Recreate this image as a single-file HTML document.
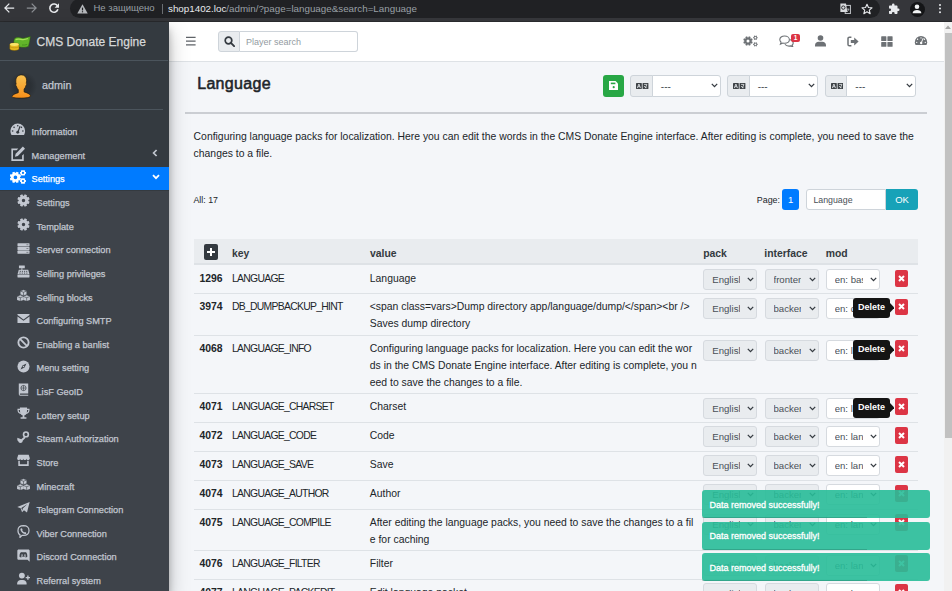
<!DOCTYPE html>
<html><head><meta charset="utf-8">
<style>
*{box-sizing:border-box;margin:0;padding:0}
html,body{width:952px;height:591px;overflow:hidden;background:#f4f6f9;font-family:"Liberation Sans",sans-serif;color:#212529}
.a{position:absolute}
#chrome{left:0;top:0;width:952px;height:22px;background:#35363a}
#pill{left:70px;top:-1px;width:810px;height:18.6px;background:#202124;border-radius:10px}
#sidebar{z-index:5;left:0;top:22px;width:168.5px;height:569px;background:#343a40;box-shadow:0 9px 19px rgba(0,0,0,.25),0 7px 7px rgba(0,0,0,.22)}
#navbar{left:168px;top:22px;width:776px;height:40px;background:#fff;border-bottom:1px solid #dee2e6}
#content{left:168px;top:62px;width:776px;height:529px;background:#f4f6f9}
#scroll{left:944px;top:22px;width:8px;height:569px;background:#f1f1f1}
.nav{position:absolute;left:0;width:168px;height:23.5px;color:#c2c7d0;font-size:9.7px;line-height:23.5px;white-space:nowrap}
.nav .t{position:absolute;left:31.5px;top:0}
.nav.sub .t{left:36.5px}
.nav svg{position:absolute}
.txt{white-space:nowrap;position:absolute}
.sb{-webkit-text-stroke:0.25px currentColor}
</style></head><body>
<!-- browser chrome -->
<div id="chrome" class="a"></div>
<div id="pill" class="a"></div>
<div class="a" style="left:0;top:21px;width:952px;height:1px;background:#292a2d"></div>
<svg class="a" style="left:3px;top:2.3px" width="12" height="12" viewBox="0 0 12 12"><path d="M11.2 6H2.2M6.3 1.6L1.9 6l4.4 4.4" fill="none" stroke="#e8eaed" stroke-width="1.25"/></svg>
<svg class="a" style="left:25.5px;top:2.3px" width="12" height="12" viewBox="0 0 12 12"><path d="M.8 6h9M5.7 1.6L10.1 6l-4.4 4.4" fill="none" stroke="#8b8e93" stroke-width="1.25"/></svg>
<svg class="a" style="left:48px;top:2px" width="12" height="12" viewBox="0 0 12 12"><path d="M9.6 4.2A4.1 4.1 0 1 0 9.9 7.3" fill="none" stroke="#e8eaed" stroke-width="1.6"/><path d="M11 1.3v4.4H6.6z" fill="#e8eaed"/></svg>
<svg class="a" style="left:76.5px;top:3.5px" width="11" height="10" viewBox="0 0 11 10"><path d="M5.5 0.3L10.7 9.4H0.3z" fill="#b5b8bc"/><rect x="4.9" y="3.6" width="1.2" height="2.8" fill="#202124"/><rect x="4.9" y="7.2" width="1.2" height="1.1" fill="#202124"/></svg>
<div class="txt" style="left:93.5px;top:1.2px;font-size:9.5px;line-height:13px;color:#9aa0a6">Не защищено</div>
<div class="a" style="left:161.5px;top:3.5px;width:1px;height:10px;background:#6b6e72"></div>
<div class="txt" style="left:168px;top:2px;font-size:9.8px;line-height:13px;color:#9aa0a6"><span style="color:#e8eaed">shop1402.loc</span>/admin/?page=language&amp;search=Language</div>
<svg class="a" style="left:839.5px;top:3px" width="11" height="11" viewBox="0 0 11 11"><rect x="5.2" y="2.4" width="5.2" height="8.2" fill="none" stroke="#c5c8cc" stroke-width="1"/><path d="M.4 .4h5.6l1.4 8.6H.4z" fill="#d8dadd"/><circle cx="3.3" cy="4.6" r="1.7" fill="none" stroke="#202124" stroke-width=".9"/><path d="M6.6 6.2h2.6M8 5.6v.6M6.8 9c1-.6 1.8-1.6 2-2.8" stroke="#c5c8cc" stroke-width=".7" fill="none"/></svg>
<svg class="a" style="left:861px;top:3px" width="12" height="12" viewBox="0 0 24 24"><path d="M12 2.5l2.9 6.6 7.1.6-5.4 4.7 1.7 7-6.3-3.8-6.3 3.8 1.7-7L2 9.7l7.1-.6z" fill="none" stroke="#e8eaed" stroke-width="2.2" stroke-linejoin="round"/></svg>
<svg class="a" style="left:888px;top:3px" width="12" height="12" viewBox="0 0 24 24"><path d="M20.5 11H19V7c0-1.1-.9-2-2-2h-4V3.5a2.5 2.5 0 0 0-5 0V5H4c-1.1 0-2 .9-2 2v3.8h1.5a2.7 2.7 0 0 1 0 5.4H2V20c0 1.1.9 2 2 2h3.8v-1.5a2.7 2.7 0 0 1 5.4 0V22H17c1.1 0 2-.9 2-2v-4h1.5a2.5 2.5 0 0 0 0-5z" fill="#e8eaed"/></svg>
<div class="a" style="left:909.5px;top:1.5px;width:15px;height:15px;border-radius:50%;background:#141517"></div>
<svg class="a" style="left:911px;top:3px" width="12" height="12" viewBox="0 0 12 12"><circle cx="6" cy="3.8" r="2.3" fill="#f1f3f4"/><path d="M1.6 10.2c0-2 2.2-3.2 4.4-3.2s4.4 1.2 4.4 3.2z" fill="#f1f3f4"/></svg>
<div class="a" style="left:939px;top:4px;width:2.4px;height:2.4px;border-radius:50%;background:#e8eaed;box-shadow:0 3.6px 0 #e8eaed,0 7.2px 0 #e8eaed"></div>

<!-- sidebar -->
<div id="sidebar" class="a"></div>
<div class="a" style="z-index:6;left:0;top:22px;width:168px;height:39px;border-bottom:1px solid #4b545c"></div>
<svg class="a" style="z-index:6;left:9px;top:35.5px" width="22" height="15" viewBox="0 0 22 15"><path d="M5.2 3.2C6.4 1.6 8.6 1 10.6 1.6c2.2.6 4.4.8 6.6 0 1.4-.5 2.8-1 4.2-1.2-.4 3.4-1 6.8-2 10-2.2.8-4.6 1.2-7 .8-2.4-.4-4.8-.2-7 .6C4.6 8.8 4.6 5.8 5.2 3.2z" fill="#62b42a" stroke="#2d5a12" stroke-width=".5"/><path d="M6.6 3.8c1.8-1.2 3.6-.8 5.4-.4 2.4.5 4.6.2 7-.8" fill="none" stroke="#a6e05a" stroke-width="1.1"/><path d="M13 9c1.8.3 3.6 0 5.2-.6" fill="none" stroke="#3f8a1c" stroke-width=".8"/><path d="M.8 8.6c0-.9 2.1-1.6 4.6-1.6S10 7.7 10 8.6v4.2c0 .9-2.1 1.7-4.6 1.7S.8 13.7.8 12.8z" fill="#e6b81e" stroke="#7a5a08" stroke-width=".5"/><ellipse cx="5.4" cy="8.5" rx="4.4" ry="1.4" fill="#f8e46a"/><path d="M1.2 10.8c1 .8 2.6 1 4.2 1s3.2-.2 4.2-1" stroke="#b48a10" stroke-width=".6" fill="none"/></svg>
<div class="txt sb" style="z-index:6;left:36.5px;top:34.3px;font-size:12px;line-height:16px;color:#d6d8d9">CMS Donate Engine</div>
<div class="a" style="z-index:6;left:0;top:61px;width:163px;height:49px;border-bottom:1px solid #4b545c"></div>
<div class="a" style="z-index:6;left:8.5px;top:72px;width:28px;height:28px;border-radius:50%;background:radial-gradient(circle,#2b3035 40%,#343a40 72%)"></div>
<svg class="a" style="z-index:6;left:12px;top:73.5px" width="19" height="27" viewBox="0 0 19 27"><defs><linearGradient id="og" x1="0" y1="0" x2="0" y2="1"><stop offset="0" stop-color="#f8c150"/><stop offset="1" stop-color="#f78f1a"/></linearGradient></defs><path d="M9.4 .9c3.1 0 5.2 2 5.2 5.4 0 1.2-.1 2.2-.4 3 .6.3.5 1.5-.2 2.1-.4 1.6-1 2.8-1.9 3.6v2.9c2.8.8 5.4 1.8 6.2 3.4.5 1.2-.3 2.8-8.9 2.8S-.4 23.3.1 22.1c.8-1.6 3.4-2.6 6.2-3.4v-2.9c-.9-.8-1.5-2-1.9-3.6-.7-.6-.8-1.8-.2-2.1-.3-.8-.4-1.8-.4-3C3.8 2.9 6.2.9 9.4.9z" fill="url(#og)" stroke="#221a10" stroke-width=".7"/></svg>
<div class="txt sb" style="z-index:6;left:42px;top:78.4px;font-size:10.8px;line-height:14px;color:#c2c7d0">admin</div>
<div class="a" style="z-index:6;left:0;top:190.5px;width:168.5px;height:401px;background:#3e434a"></div>
<div class="a" style="z-index:6;left:0;top:167.2px;width:168.5px;height:23.3px;background:#007bff"></div>
<svg class="a" style="z-index:7;left:151.5px;top:173.7px" width="8" height="6" viewBox="0 0 8 6"><path d="M1 1.2l3 3 3-3" fill="none" stroke="#fff" stroke-width="1.8"/></svg>
<svg class="a" style="z-index:7;left:152px;top:148.5px" width="6" height="8" viewBox="0 0 6 8"><path d="M4.6 1L1.6 4l3 3" fill="none" stroke="#c2c7d0" stroke-width="1.7"/></svg>
<svg class="a ic" style="z-index:7;left:10px;top:122.15px" width="15.5" height="15.5" viewBox="0 0 16 16"><path d="M8 1.6A7.6 7.6 0 0 0 .4 9.2c0 1.5.4 2.9 1.1 4.1h13c.7-1.2 1.1-2.6 1.1-4.1A7.6 7.6 0 0 0 8 1.6z" fill="#c2c7d0"/><g fill="#343a40"><circle cx="8" cy="3.9" r=".85"/><circle cx="4.2" cy="5.5" r=".85"/><circle cx="2.7" cy="9.3" r=".85"/><circle cx="13.3" cy="9.3" r=".85"/><circle cx="11.8" cy="5.5" r=".85"/><circle cx="8" cy="10.6" r="1.5"/></g><path d="M10.4 4.4L8.2 10.4" stroke="#343a40" stroke-width="1.2"/></svg>
<svg class="a ic" style="z-index:7;left:10px;top:145.77px" width="15.5" height="15.5" viewBox="0 0 16 16"><path d="M1.4 2.6h7.2l-1.7 1.7H3.1v9.4h9.4V9.9l1.7-1.7v7.2H1.4z" fill="#c2c7d0"/><path d="M13.3.6l2.2 2.2-7.4 7.4-3 .8.8-3z" fill="#c2c7d0"/></svg>
<svg class="a ic" style="z-index:7;left:10px;top:169.39px" width="15.5" height="15.5" viewBox="0 0 16 16"><path fill-rule="evenodd" d="M10.28 9.01L11.48 9.78L10.59 11.93L9.20 11.62L8.62 12.20L8.93 13.59L6.78 14.48L6.01 13.28L5.19 13.28L4.42 14.48L2.27 13.59L2.58 12.20L2.00 11.62L0.61 11.93L-0.28 9.78L0.92 9.01L0.92 8.19L-0.28 7.42L0.61 5.27L2.00 5.58L2.58 5.00L2.27 3.61L4.42 2.72L5.19 3.92L6.01 3.92L6.78 2.72L8.93 3.61L8.62 5.00L9.20 5.58L10.59 5.27L11.48 7.42L10.28 8.19ZM7.50 8.60A1.9 1.9 0 1 0 3.70 8.60A1.9 1.9 0 1 0 7.50 8.60Z" fill="#fff"/><path fill-rule="evenodd" d="M15.71 3.04L16.50 3.20L16.50 4.80L15.71 4.96L15.38 5.52L15.64 6.29L14.26 7.08L13.73 6.48L13.07 6.48L12.54 7.08L11.16 6.29L11.42 5.52L11.09 4.96L10.30 4.80L10.30 3.20L11.09 3.04L11.42 2.48L11.16 1.71L12.54 0.92L13.07 1.52L13.73 1.52L14.26 0.92L15.64 1.71L15.38 2.48ZM14.50 4.00A1.1 1.1 0 1 0 12.30 4.00A1.1 1.1 0 1 0 14.50 4.00Z" fill="#fff"/><path fill-rule="evenodd" d="M15.71 11.44L16.50 11.60L16.50 13.20L15.71 13.36L15.38 13.92L15.64 14.69L14.26 15.48L13.73 14.88L13.07 14.88L12.54 15.48L11.16 14.69L11.42 13.92L11.09 13.36L10.30 13.20L10.30 11.60L11.09 11.44L11.42 10.88L11.16 10.11L12.54 9.32L13.07 9.92L13.73 9.92L14.26 9.32L15.64 10.11L15.38 10.88ZM14.50 12.40A1.1 1.1 0 1 0 12.30 12.40A1.1 1.1 0 1 0 14.50 12.40Z" fill="#fff"/></svg>
<svg class="a ic" style="z-index:7;left:17px;top:194.26px" width="13" height="13" viewBox="0 0 16 16"><path fill-rule="evenodd" d="M13.98 8.53L15.55 9.51L14.41 12.27L12.60 11.85L11.85 12.60L12.27 14.41L9.51 15.55L8.53 13.98L7.47 13.98L6.49 15.55L3.73 14.41L4.15 12.60L3.40 11.85L1.59 12.27L0.45 9.51L2.02 8.53L2.02 7.47L0.45 6.49L1.59 3.73L3.40 4.15L4.15 3.40L3.73 1.59L6.49 0.45L7.47 2.02L8.53 2.02L9.51 0.45L12.27 1.59L11.85 3.40L12.60 4.15L14.41 3.73L15.55 6.49L13.98 7.47ZM10.10 8.00A2.1 2.1 0 1 0 5.90 8.00A2.1 2.1 0 1 0 10.10 8.00Z" fill="#c2c7d0"/></svg>
<svg class="a ic" style="z-index:7;left:17px;top:217.88px" width="13" height="13" viewBox="0 0 16 16"><path fill-rule="evenodd" d="M13.98 8.53L15.55 9.51L14.41 12.27L12.60 11.85L11.85 12.60L12.27 14.41L9.51 15.55L8.53 13.98L7.47 13.98L6.49 15.55L3.73 14.41L4.15 12.60L3.40 11.85L1.59 12.27L0.45 9.51L2.02 8.53L2.02 7.47L0.45 6.49L1.59 3.73L3.40 4.15L4.15 3.40L3.73 1.59L6.49 0.45L7.47 2.02L8.53 2.02L9.51 0.45L12.27 1.59L11.85 3.40L12.60 4.15L14.41 3.73L15.55 6.49L13.98 7.47ZM10.10 8.00A2.1 2.1 0 1 0 5.90 8.00A2.1 2.1 0 1 0 10.10 8.00Z" fill="#c2c7d0"/></svg>
<svg class="a ic" style="z-index:7;left:17px;top:241.50px" width="13" height="13" viewBox="0 0 16 16"><g fill="#c2c7d0"><rect x=".6" y="1.4" width="14.8" height="4" rx=".8"/><rect x=".6" y="6" width="14.8" height="4" rx=".8"/><rect x=".6" y="10.6" width="14.8" height="4" rx=".8"/></g><g fill="#3e434a" opacity=".7"><rect x="11.6" y="3" width="2.4" height=".9"/><rect x="11.6" y="7.6" width="2.4" height=".9"/><rect x="11.6" y="12.2" width="2.4" height=".9"/></g></svg>
<svg class="a ic" style="z-index:7;left:17px;top:265.12px" width="13" height="13" viewBox="0 0 16 16"><g fill="#c2c7d0"><rect x="2.4" y=".6" width="7.2" height="3.4" rx=".4"/><rect x="5.3" y="4" width="1.4" height="2"/><path d="M2.2 5.8h11.6l1.6 6H.6z"/><rect x=".6" y="12.4" width="14.8" height="3" rx=".5"/></g><g fill="#3e434a"><rect x="3.4" y="7.2" width="1.4" height="1.1"/><rect x="6" y="7.2" width="1.4" height="1.1"/><rect x="8.6" y="7.2" width="1.4" height="1.1"/><rect x="11.2" y="7.2" width="1.4" height="1.1"/><rect x="3" y="9.4" width="1.4" height="1.1"/><rect x="5.8" y="9.4" width="1.4" height="1.1"/><rect x="8.6" y="9.4" width="1.4" height="1.1"/><rect x="11.4" y="9.4" width="1.4" height="1.1"/></g></svg>
<svg class="a ic" style="z-index:7;left:17px;top:288.74px" width="13" height="13" viewBox="0 0 16 16"><path d="M8 1.00L12.0 2.50V6.70L8 8.20L4.0 6.70V2.50Z" fill="#c2c7d0"/><path d="M4.1 7.70L8.1 9.20V13.40L4.1 14.90L0.09999999999999964 13.40V9.20Z" fill="#c2c7d0"/><path d="M11.9 7.70L15.9 9.20V13.40L11.9 14.90L7.9 13.40V9.20Z" fill="#c2c7d0"/><path d="M4.0 2.50L8 4.00L12.0 2.50M8 4.00V8.20M0.09999999999999964 9.20L4.1 10.70L8.1 9.20M4.1 10.70V14.90M7.9 9.20L11.9 10.70L15.9 9.20M11.9 10.70V14.90" stroke="#3e434a" stroke-width=".75" fill="none"/><path d="M8 1.00L12.0 2.50V6.70L8 8.20L4.0 6.70V2.50Z" stroke="#3e434a" stroke-width=".5" fill="none"/></svg>
<svg class="a ic" style="z-index:7;left:17px;top:312.36px" width="13" height="13" viewBox="0 0 16 16"><path d="M.6 2.6h14.8v1.2L8 9.2.6 3.8z" fill="#c2c7d0"/><path d="M.6 5.6L8 10.9l7.4-5.3v7.8H.6z" fill="#c2c7d0"/></svg>
<svg class="a ic" style="z-index:7;left:17px;top:335.98px" width="13" height="13" viewBox="0 0 16 16"><circle cx="8" cy="8" r="6.3" fill="none" stroke="#c2c7d0" stroke-width="2.3"/><path d="M3.6 3.6l8.8 8.8" stroke="#c2c7d0" stroke-width="2.3"/></svg>
<svg class="a ic" style="z-index:7;left:17px;top:359.60px" width="13" height="13" viewBox="0 0 16 16"><circle cx="8" cy="8" r="7.4" fill="#c2c7d0"/><path d="M11.6 4.4L9.3 9.3 4.4 11.6l2.3-4.9z" fill="#3e434a"/><circle cx="8" cy="8" r="1" fill="#c2c7d0"/></svg>
<svg class="a ic" style="z-index:7;left:17px;top:383.22px" width="13" height="13" viewBox="0 0 16 16"><path d="M2.2.6h11.6v12.2H4a1 1 0 0 0 0 1.8h9.8v1H3.8a1.7 1.7 0 0 1-1.6-1.7z" fill="#c2c7d0"/><circle cx="8" cy="6.2" r="3.2" fill="none" stroke="#3e434a" stroke-width=".9"/><path d="M4.8 6.2h6.4M8 3v6.4" stroke="#3e434a" stroke-width=".8"/></svg>
<svg class="a ic" style="z-index:7;left:17px;top:406.84px" width="13" height="13" viewBox="0 0 16 16"><path d="M3.6.6h8.8v1.4h3v1.7c0 2.6-1.7 4.5-4 4.8-.6.9-1.4 1.6-2.3 1.8v2.3h2.5v1.8H4.4v-1.8h2.5v-2.3c-.9-.2-1.7-.9-2.3-1.8C2.3 8.2.6 6.3.6 3.7V2h3z" fill="#c2c7d0"/><path d="M2.1 3.6c0 1.5.8 2.8 2 3.3-.3-.9-.5-2-.5-3.3zM13.9 3.6c0 1.5-.8 2.8-2 3.3.3-.9.5-2 .5-3.3z" fill="#3e434a"/></svg>
<svg class="a ic" style="z-index:7;left:17px;top:430.46px" width="13" height="13" viewBox="0 0 16 16"><circle cx="11" cy="5.4" r="3.9" fill="#c2c7d0"/><circle cx="11" cy="5.4" r="1.9" fill="#3e434a"/><path d="M.4 9.4l4.8 2.1 4-3.4 1.4 1.4-3.6 3.6c0 1.7-1.3 2.8-2.8 2.8-1.3 0-2.3-.9-2.6-2.1L.4 12.6z" fill="#c2c7d0"/></svg>
<svg class="a ic" style="z-index:7;left:17px;top:454.08px" width="13" height="13" viewBox="0 0 16 16"><path d="M1.6.9h12.8l1.4 4.4c0 1.3-1 2.2-2.1 2.2s-2-.9-2-2c0 1.1-.9 2-2 2s-1.9-.9-1.9-2c0 1.1-.9 2-1.9 2s-2-.9-2-2c0 1.1-.9 2-2 2S.2 6.6.2 5.3z" fill="#c2c7d0"/><path d="M1.6 8.3h1.9v4.2h9v-4.2h1.9v6.6H1.6z" fill="#c2c7d0"/></svg>
<svg class="a ic" style="z-index:7;left:17px;top:477.70px" width="13" height="13" viewBox="0 0 16 16"><path d="M8 1.00L12.0 2.50V6.70L8 8.20L4.0 6.70V2.50Z" fill="#c2c7d0"/><path d="M4.1 7.70L8.1 9.20V13.40L4.1 14.90L0.09999999999999964 13.40V9.20Z" fill="#c2c7d0"/><path d="M11.9 7.70L15.9 9.20V13.40L11.9 14.90L7.9 13.40V9.20Z" fill="#c2c7d0"/><path d="M4.0 2.50L8 4.00L12.0 2.50M8 4.00V8.20M0.09999999999999964 9.20L4.1 10.70L8.1 9.20M4.1 10.70V14.90M7.9 9.20L11.9 10.70L15.9 9.20M11.9 10.70V14.90" stroke="#3e434a" stroke-width=".75" fill="none"/><path d="M8 1.00L12.0 2.50V6.70L8 8.20L4.0 6.70V2.50Z" stroke="#3e434a" stroke-width=".5" fill="none"/></svg>
<svg class="a ic" style="z-index:7;left:17px;top:501.32px" width="13" height="13" viewBox="0 0 16 16"><path d="M15.6 1.2L.3 7.3l4.2 1.5 1.7 5 2.4-2.5 3.7 2.8zM5.3 8.7l7.6-5-5.8 5.6-.5 2.5z" fill="#c2c7d0"/></svg>
<svg class="a ic" style="z-index:7;left:17px;top:524.94px" width="13" height="13" viewBox="0 0 16 16"><path d="M8 .8C3.8.8 1.2 2.5 1.2 6.9c0 2.7.8 4.5 2.5 5.3v3.1l2.5-2.6c.6.1 1.1.1 1.8.1 4.2 0 6.8-1.7 6.8-5.9S12.2.8 8 .8z" fill="none" stroke="#c2c7d0" stroke-width="1.5"/><path d="M5.4 4c.5-.2 1 .4 1.3 1.1.3.6 0 1-.3 1.3.5 1.3 1.4 2.1 2.7 2.7.3-.3.7-.6 1.3-.3.6.3 1.3.8 1.1 1.3-.3.9-1.1 1.2-1.8 1-2.7-.7-4.8-2.8-5.5-5.3-.2-.8.2-1.4 1.2-1.8z" fill="#c2c7d0"/></svg>
<svg class="a ic" style="z-index:7;left:17px;top:548.56px" width="13" height="13" viewBox="0 0 16 16"><path d="M2 .6h12c.9 0 1.6.7 1.6 1.6v13.4L13 13.2H2c-.9 0-1.6-.7-1.6-1.6V2.2C.4 1.3 1.1.6 2 .6z" fill="#c2c7d0"/><path d="M4.2 4.6c1-.8 2-1 2.4-.8l.2.4c.8-.1 1.6-.1 2.4 0l.2-.4c.4-.2 1.4 0 2.4.8.8 1.6 1 3.2.9 4.9-.7.5-1.4.8-2 1l-.5-.8c.4-.1.7-.3 1-.5-.2-.1-.3-.2-.4-.2-1.9.8-3.9.8-5.8 0l-.4.2c.3.2.6.4 1 .5l-.5.8c-.6-.2-1.3-.5-2-1-.1-1.7.1-3.3.9-4.9z" fill="#3e434a"/><ellipse cx="6.2" cy="7.6" rx=".9" ry="1" fill="#c2c7d0"/><ellipse cx="9.8" cy="7.6" rx=".9" ry="1" fill="#c2c7d0"/></svg>
<svg class="a ic" style="z-index:7;left:17px;top:572.18px" width="13" height="13" viewBox="0 0 16 16"><circle cx="6" cy="4.4" r="3.6" fill="#c2c7d0"/><path d="M.2 15.4v-1.2c0-2.6 2-4.4 4.4-4.4h2.8c2.4 0 4.4 1.8 4.4 4.4v1.2z" fill="#c2c7d0"/><path d="M13.4 4.2v5.4M10.7 6.9h5.4" stroke="#c2c7d0" stroke-width="1.7"/></svg>
<div class="txt sb" style="z-index:7;left:31.5px;top:125.20px;font-size:9.2px;line-height:14px;color:#c2c7d0">Information</div>
<div class="txt sb" style="z-index:7;left:31.5px;top:148.82px;font-size:9.2px;line-height:14px;color:#c2c7d0">Management</div>
<div class="txt sb" style="z-index:7;left:31.5px;top:172.44px;font-size:9.2px;line-height:14px;color:#fff">Settings</div>
<div class="txt sb" style="z-index:7;left:36.5px;top:196.06px;font-size:9.2px;line-height:14px;color:#c2c7d0">Settings</div>
<div class="txt sb" style="z-index:7;left:36.5px;top:219.68px;font-size:9.2px;line-height:14px;color:#c2c7d0">Template</div>
<div class="txt sb" style="z-index:7;left:36.5px;top:243.30px;font-size:9.2px;line-height:14px;color:#c2c7d0">Server connection</div>
<div class="txt sb" style="z-index:7;left:36.5px;top:266.92px;font-size:9.2px;line-height:14px;color:#c2c7d0">Selling privileges</div>
<div class="txt sb" style="z-index:7;left:36.5px;top:290.54px;font-size:9.2px;line-height:14px;color:#c2c7d0">Selling blocks</div>
<div class="txt sb" style="z-index:7;left:36.5px;top:314.16px;font-size:9.2px;line-height:14px;color:#c2c7d0">Configuring SMTP</div>
<div class="txt sb" style="z-index:7;left:36.5px;top:337.78px;font-size:9.2px;line-height:14px;color:#c2c7d0">Enabling a banlist</div>
<div class="txt sb" style="z-index:7;left:36.5px;top:361.40px;font-size:9.2px;line-height:14px;color:#c2c7d0">Menu setting</div>
<div class="txt sb" style="z-index:7;left:36.5px;top:385.02px;font-size:9.2px;line-height:14px;color:#c2c7d0">LisF GeoID</div>
<div class="txt sb" style="z-index:7;left:36.5px;top:408.64px;font-size:9.2px;line-height:14px;color:#c2c7d0">Lottery setup</div>
<div class="txt sb" style="z-index:7;left:36.5px;top:432.26px;font-size:9.2px;line-height:14px;color:#c2c7d0">Steam Authorization</div>
<div class="txt sb" style="z-index:7;left:36.5px;top:455.88px;font-size:9.2px;line-height:14px;color:#c2c7d0">Store</div>
<div class="txt sb" style="z-index:7;left:36.5px;top:479.50px;font-size:9.2px;line-height:14px;color:#c2c7d0">Minecraft</div>
<div class="txt sb" style="z-index:7;left:36.5px;top:503.12px;font-size:9.2px;line-height:14px;color:#c2c7d0">Telegram Connection</div>
<div class="txt sb" style="z-index:7;left:36.5px;top:526.74px;font-size:9.2px;line-height:14px;color:#c2c7d0">Viber Connection</div>
<div class="txt sb" style="z-index:7;left:36.5px;top:550.36px;font-size:9.2px;line-height:14px;color:#c2c7d0">Discord Connection</div>
<div class="txt sb" style="z-index:7;left:36.5px;top:573.98px;font-size:9.2px;line-height:14px;color:#c2c7d0">Referral system</div>

<!-- navbar -->
<div id="navbar" class="a"></div>
<svg class="a" style="left:185.5px;top:36px" width="10" height="10" viewBox="0 0 10 10"><path d="M0 1.4h9.6M0 5.2h9.6M0 8.9h9.6" stroke="#5f6368" stroke-width="1.3"/></svg>
<div class="a" style="left:218px;top:31.2px;width:22px;height:21px;background:#e9ecef;border:1px solid #ced4da;border-radius:3px 0 0 3px"></div>
<svg class="a" style="left:223.5px;top:36px" width="11" height="11" viewBox="0 0 11 11"><circle cx="4.5" cy="4.5" r="3.3" fill="none" stroke="#343a40" stroke-width="1.7"/><path d="M6.9 6.9l3.2 3.2" stroke="#343a40" stroke-width="1.9" stroke-linecap="round"/></svg>
<div class="a" style="left:240px;top:31.2px;width:118px;height:21px;background:#fff;border:1px solid #ced4da;border-left:none;border-radius:0 3px 3px 0"></div>
<div class="txt" style="left:246px;top:35.5px;font-size:9px;line-height:13px;color:#939ba2">Player search</div>
<svg class="a" style="left:742px;top:34px" width="17" height="14" viewBox="0 0 17 14"><path fill-rule="evenodd" d="M9.59 7.31L10.71 7.93L10.00 9.65L8.77 9.30L8.32 9.75L8.67 10.99L6.96 11.70L6.33 10.59L5.69 10.59L5.07 11.71L3.35 11.00L3.70 9.77L3.25 9.32L2.01 9.67L1.30 7.96L2.41 7.33L2.41 6.69L1.29 6.07L2.00 4.35L3.23 4.70L3.68 4.25L3.33 3.01L5.04 2.30L5.67 3.41L6.31 3.41L6.93 2.29L8.65 3.00L8.30 4.23L8.75 4.68L9.99 4.33L10.70 6.04L9.59 6.67ZM7.50 7.00A1.5 1.5 0 1 0 4.50 7.00A1.5 1.5 0 1 0 7.50 7.00Z" fill="#6d7175"/><path fill-rule="evenodd" d="M14.97 3.05L15.63 3.13L15.63 4.27L14.97 4.35L14.75 4.73L15.01 5.34L14.02 5.92L13.62 5.39L13.18 5.39L12.78 5.92L11.79 5.34L12.05 4.73L11.83 4.35L11.17 4.27L11.17 3.13L11.83 3.05L12.05 2.67L11.79 2.06L12.78 1.48L13.18 2.01L13.62 2.01L14.02 1.48L15.01 2.06L14.75 2.67ZM14.30 3.70A0.9 0.9 0 1 0 12.50 3.70A0.9 0.9 0 1 0 14.30 3.70Z" fill="#6d7175"/><path fill-rule="evenodd" d="M14.97 9.75L15.63 9.83L15.63 10.97L14.97 11.05L14.75 11.43L15.01 12.04L14.02 12.62L13.62 12.09L13.18 12.09L12.78 12.62L11.79 12.04L12.05 11.43L11.83 11.05L11.17 10.97L11.17 9.83L11.83 9.75L12.05 9.37L11.79 8.76L12.78 8.18L13.18 8.71L13.62 8.71L14.02 8.18L15.01 8.76L14.75 9.37ZM14.30 10.40A0.9 0.9 0 1 0 12.50 10.40A0.9 0.9 0 1 0 14.30 10.40Z" fill="#6d7175"/></svg>
<svg class="a" style="left:778.5px;top:35px" width="15" height="12" viewBox="0 0 15 12"><path d="M5.6 1C2.8 1 .8 2.6.8 4.6c0 1 .5 1.9 1.3 2.5L1.4 9.2 3.8 8c.6.2 1.2.3 1.8.3 2.8 0 4.8-1.6 4.8-3.6S8.4 1 5.6 1z" fill="none" stroke="#6d7175" stroke-width="1.1"/><path d="M11.3 4.6c1.7.5 2.9 1.8 2.9 3.3 0 .9-.4 1.7-1.1 2.3l.7 1.6-2.2-.9c-.5.1-1 .2-1.6.2-1.8 0-3.3-.8-4.1-1.9" fill="none" stroke="#6d7175" stroke-width="1.1"/></svg>
<div class="a" style="left:791px;top:33.5px;width:9px;height:8.5px;background:#dc3545;border-radius:2px"></div>
<div class="txt" style="left:791px;top:33.2px;width:9px;text-align:center;font-size:6.5px;line-height:9px;font-weight:700;color:#fff">1</div>
<svg class="a" style="left:814.5px;top:35px" width="11" height="12" viewBox="0 0 11 12"><circle cx="5.5" cy="3" r="2.8" fill="#6d7175"/><path d="M0 11.6V10.4C0 8.2 1.6 6.8 3.6 6.8h3.8c2 0 3.6 1.4 3.6 3.6v1.2z" fill="#6d7175"/></svg>
<svg class="a" style="left:846.5px;top:35.5px" width="12" height="11" viewBox="0 0 12 11"><path d="M4.4 1.2H2.4C1.6 1.2 1 1.8 1 2.6v5.8c0 .8.6 1.4 1.4 1.4h2" fill="none" stroke="#6d7175" stroke-width="1.5"/><path d="M7.2 1.4l4.4 4.1-4.4 4.1V7.1H3.8V3.9h3.4z" fill="#6d7175"/></svg>
<svg class="a" style="left:880.5px;top:35.5px" width="12" height="11" viewBox="0 0 12 11"><g fill="#6d7175"><rect x=".2" y=".2" width="5.2" height="4.9" rx=".6"/><rect x="6.4" y=".2" width="5.2" height="4.9" rx=".6"/><rect x=".2" y="5.9" width="5.2" height="4.9" rx=".6"/><rect x="6.4" y="5.9" width="5.2" height="4.9" rx=".6"/></g></svg>
<svg class="a" style="left:913.5px;top:35px" width="14" height="12" viewBox="0 0 16 14"><path d="M8 1.2A7.2 7.2 0 0 0 .8 8.4c0 1.3.3 2.4.9 3.4h12.6c.6-1 .9-2.1.9-3.4A7.2 7.2 0 0 0 8 1.2z" fill="#6d7175"/><circle cx="8" cy="3.4" r=".8" fill="#fff"/><circle cx="4" cy="5" r=".8" fill="#fff"/><circle cx="3" cy="8.6" r=".8" fill="#fff"/><circle cx="13" cy="8.6" r=".8" fill="#fff"/><circle cx="12" cy="5" r=".8" fill="#fff"/><path d="M10.6 3.6L8.6 8.6" stroke="#fff" stroke-width="1.1"/><circle cx="8.2" cy="9.4" r="1.4" fill="#fff"/></svg>

<!-- content -->
<div id="content" class="a"></div>
<div class="txt" style="left:197.2px;top:73.8px;font-size:16px;line-height:20px;font-weight:400;letter-spacing:0.32px;-webkit-text-stroke:.55px #212529;color:#212529">Language</div>
<div class="a" style="left:602.8px;top:74.8px;width:21.6px;height:21.8px;background:#28a745;border-radius:3px"></div>
<svg class="a" style="left:608.8px;top:80.6px" width="9.4" height="9.6" viewBox="0 0 9.4 9.6"><path d="M0 0h6.6l2.8 2.8v6.8H0z" fill="#fff"/><rect x="1.8" y="1.6" width="4.6" height="1.6" fill="#28a745"/><circle cx="4.7" cy="6.2" r="1.1" fill="#28a745"/></svg>
<div class="a" style="left:630.3px;top:75px;width:22.5px;height:21.5px;background:#e9ecef;border:1px solid #ced4da;border-radius:3px 0 0 3px"></div>
<svg class="a" style="left:636.0999999999999px;top:82.8px" width="12.5" height="6" viewBox="0 0 12.5 6"><rect x="0" y="0" width="5.8" height="6" rx=".6" fill="#3d4246"/><rect x="6.6" y="0" width="5.8" height="6" rx=".6" fill="#3d4246"/><path d="M1.3 5.1L2.9 1l1.6 4.1M1.9 3.7h2" stroke="#e9ecef" stroke-width=".8" fill="none"/><path d="M8.1 1.4h2.8l-1.6 3.8M8 3.2c.8.8 1.8 1.4 2.6 1.6" stroke="#e9ecef" stroke-width=".8" fill="none"/></svg>
<div class="a" style="left:651.8px;top:75px;width:69.5px;height:21.5px;background:#fff;border:1px solid #ced4da;border-radius:0 3px 3px 0"></div>
<div class="txt" style="left:660.8px;top:79.5px;font-size:10px;line-height:13px;color:#495057">---</div>
<svg class="a" style="left:711.3px;top:83px" width="7" height="5" viewBox="0 0 7 5"><path d="M.8 .9l2.7 2.7L6.2 .9" fill="none" stroke="#343a40" stroke-width="1.3"/></svg>
<div class="a" style="left:727.2px;top:75px;width:22.5px;height:21.5px;background:#e9ecef;border:1px solid #ced4da;border-radius:3px 0 0 3px"></div>
<svg class="a" style="left:733.0px;top:82.8px" width="12.5" height="6" viewBox="0 0 12.5 6"><rect x="0" y="0" width="5.8" height="6" rx=".6" fill="#3d4246"/><rect x="6.6" y="0" width="5.8" height="6" rx=".6" fill="#3d4246"/><path d="M1.3 5.1L2.9 1l1.6 4.1M1.9 3.7h2" stroke="#e9ecef" stroke-width=".8" fill="none"/><path d="M8.1 1.4h2.8l-1.6 3.8M8 3.2c.8.8 1.8 1.4 2.6 1.6" stroke="#e9ecef" stroke-width=".8" fill="none"/></svg>
<div class="a" style="left:748.7px;top:75px;width:69.5px;height:21.5px;background:#fff;border:1px solid #ced4da;border-radius:0 3px 3px 0"></div>
<div class="txt" style="left:757.7px;top:79.5px;font-size:10px;line-height:13px;color:#495057">---</div>
<svg class="a" style="left:808.2px;top:83px" width="7" height="5" viewBox="0 0 7 5"><path d="M.8 .9l2.7 2.7L6.2 .9" fill="none" stroke="#343a40" stroke-width="1.3"/></svg>
<div class="a" style="left:824.8px;top:75px;width:22.5px;height:21.5px;background:#e9ecef;border:1px solid #ced4da;border-radius:3px 0 0 3px"></div>
<svg class="a" style="left:830.5999999999999px;top:82.8px" width="12.5" height="6" viewBox="0 0 12.5 6"><rect x="0" y="0" width="5.8" height="6" rx=".6" fill="#3d4246"/><rect x="6.6" y="0" width="5.8" height="6" rx=".6" fill="#3d4246"/><path d="M1.3 5.1L2.9 1l1.6 4.1M1.9 3.7h2" stroke="#e9ecef" stroke-width=".8" fill="none"/><path d="M8.1 1.4h2.8l-1.6 3.8M8 3.2c.8.8 1.8 1.4 2.6 1.6" stroke="#e9ecef" stroke-width=".8" fill="none"/></svg>
<div class="a" style="left:846.3px;top:75px;width:69.5px;height:21.5px;background:#fff;border:1px solid #ced4da;border-radius:0 3px 3px 0"></div>
<div class="txt" style="left:855.3px;top:79.5px;font-size:10px;line-height:13px;color:#495057">---</div>
<svg class="a" style="left:905.8px;top:83px" width="7" height="5" viewBox="0 0 7 5"><path d="M.8 .9l2.7 2.7L6.2 .9" fill="none" stroke="#343a40" stroke-width="1.3"/></svg>
<div class="a" style="left:185px;top:112px;width:742px;height:2px;background:#cbced3"></div>
<div class="txt" style="left:193.6px;top:127.9px;font-size:10.4px;line-height:17px;color:#212529">Configuring language packs for localization. Here you can edit the words in the CMS Donate Engine interface. After editing is complete, you need to save the<br>changes to a file.</div>
<div class="txt" style="left:193.5px;top:194.3px;font-size:8.8px;line-height:12px;color:#212529">All: 17</div>
<div class="txt" style="left:756.8px;top:194.3px;font-size:8.9px;line-height:12px;color:#212529">Page:</div>
<div class="a" style="left:782.2px;top:189px;width:17.1px;height:21.3px;background:#007bff;border-radius:3px"></div>
<div class="txt" style="left:782.2px;top:194.3px;width:17.1px;text-align:center;font-size:9.5px;line-height:12px;color:#fff">1</div>
<div class="a" style="left:806.4px;top:189px;width:80px;height:21.3px;background:#fff;border:1px solid #ced4da;border-radius:3px 0 0 3px"></div>
<div class="txt" style="left:813.4px;top:194.3px;font-size:8.8px;line-height:12px;color:#495057">Language</div>
<div class="a" style="left:886px;top:189px;width:32.2px;height:21.3px;background:#17a2b8;border-radius:0 3px 3px 0"></div>
<div class="txt" style="left:886px;top:194.3px;width:32.2px;text-align:center;font-size:9.5px;line-height:12px;color:#fff">OK</div>

<div class="a" style="left:194px;top:239px;width:724px;height:26px;background:#e9ecef;border-bottom:2px solid #dee2e6"></div>
<div class="a" style="left:204px;top:244px;width:14.4px;height:16.4px;background:#343a40;border-radius:2px"></div>
<svg class="a" style="left:206.2px;top:247.2px" width="10" height="10" viewBox="0 0 10 10"><path d="M5 1v8M1 5h8" stroke="#fff" stroke-width="2"/></svg>
<div class="txt" style="left:232px;top:246.5px;font-size:10.4px;line-height:13px;font-weight:700;color:#343a40">key</div>
<div class="txt" style="left:370px;top:246.5px;font-size:10.4px;line-height:13px;font-weight:700;color:#343a40">value</div>
<div class="txt" style="left:703.2px;top:246.5px;font-size:10.4px;line-height:13px;font-weight:700;color:#343a40">pack</div>
<div class="txt" style="left:764.3px;top:246.5px;font-size:10.4px;line-height:13px;font-weight:700;color:#343a40">interface</div>
<div class="txt" style="left:825.7px;top:246.5px;font-size:10.4px;line-height:13px;font-weight:700;color:#343a40">mod</div>
<div class="txt" style="left:199.5px;top:270.80px;font-size:10.4px;line-height:16.8px;font-weight:700;color:#212529">1296</div>
<div class="txt" style="left:232px;top:270.80px;font-size:10.4px;line-height:16.8px;letter-spacing:-0.72px;color:#212529">LANGUAGE</div>
<div class="txt" style="left:369.8px;top:270.80px;font-size:10.4px;line-height:16.8px;color:#212529">Language</div>
<div class="a" style="left:703.3px;top:269.3px;width:53.5px;height:21px;background:#e9ecef;border:1px solid #d6dadf;border-radius:3px"></div><div class="txt" style="left:712.3px;top:273.3px;width:27.5px;overflow:hidden;font-size:9.6px;line-height:13px;color:#495057">English</div><svg class="a" style="left:746.8px;top:277.3px" width="7" height="5" viewBox="0 0 7 5"><path d="M.8 .9l2.7 2.7L6.2 .9" fill="none" stroke="#343a40" stroke-width="1.3"/></svg>
<div class="a" style="left:764.5px;top:269.3px;width:54.2px;height:21px;background:#e9ecef;border:1px solid #d6dadf;border-radius:3px"></div><div class="txt" style="left:773.5px;top:273.3px;width:27px;overflow:hidden;font-size:9.6px;line-height:13px;color:#495057">frontend</div><svg class="a" style="left:808.7px;top:277.3px" width="7" height="5" viewBox="0 0 7 5"><path d="M.8 .9l2.7 2.7L6.2 .9" fill="none" stroke="#343a40" stroke-width="1.3"/></svg>
<div class="a" style="left:825.7px;top:269.3px;width:54.7px;height:21px;background:#fff;border:1px solid #d6dadf;border-radius:3px"></div><div class="txt" style="left:834.7px;top:273.3px;width:28px;overflow:hidden;font-size:9.6px;line-height:13px;color:#495057">en: bas</div><svg class="a" style="left:870.4000000000001px;top:277.3px" width="7" height="5" viewBox="0 0 7 5"><path d="M.8 .9l2.7 2.7L6.2 .9" fill="none" stroke="#343a40" stroke-width="1.3"/></svg>
<div class="a" style="left:895px;top:270.0px;width:13px;height:16.6px;background:#dc3545;border-radius:2px"></div>
<svg class="a" style="left:897.8px;top:274.8px" width="7" height="7" viewBox="0 0 7 7"><path d="M1 1l5 5M6 1L1 6" stroke="#fff" stroke-width="2"/></svg>
<div class="a" style="left:194px;top:293.0px;width:724px;height:1px;background:#dee2e6"></div>
<div class="txt" style="left:199.5px;top:299.30px;font-size:10.4px;line-height:16.8px;font-weight:700;color:#212529">3974</div>
<div class="txt" style="left:232px;top:299.30px;font-size:10.4px;line-height:16.8px;letter-spacing:-0.72px;color:#212529">DB_DUMPBACKUP_HINT</div>
<div class="txt" style="left:369.8px;top:299.30px;font-size:10.4px;line-height:16.8px;color:#212529">&lt;span class=vars&gt;Dump directory app/language/dump/&lt;/span&gt;&lt;br /&gt;<br>Saves dump directory</div>
<div class="a" style="left:703.3px;top:297.8px;width:53.5px;height:21px;background:#e9ecef;border:1px solid #d6dadf;border-radius:3px"></div><div class="txt" style="left:712.3px;top:301.8px;width:27.5px;overflow:hidden;font-size:9.6px;line-height:13px;color:#495057">English</div><svg class="a" style="left:746.8px;top:305.8px" width="7" height="5" viewBox="0 0 7 5"><path d="M.8 .9l2.7 2.7L6.2 .9" fill="none" stroke="#343a40" stroke-width="1.3"/></svg>
<div class="a" style="left:764.5px;top:297.8px;width:54.2px;height:21px;background:#e9ecef;border:1px solid #d6dadf;border-radius:3px"></div><div class="txt" style="left:773.5px;top:301.8px;width:27px;overflow:hidden;font-size:9.6px;line-height:13px;color:#495057">backend</div><svg class="a" style="left:808.7px;top:305.8px" width="7" height="5" viewBox="0 0 7 5"><path d="M.8 .9l2.7 2.7L6.2 .9" fill="none" stroke="#343a40" stroke-width="1.3"/></svg>
<div class="a" style="left:825.7px;top:297.8px;width:54.7px;height:21px;background:#fff;border:1px solid #d6dadf;border-radius:3px"></div><div class="txt" style="left:834.7px;top:301.8px;width:28px;overflow:hidden;font-size:9.6px;line-height:13px;color:#495057">en: d</div><svg class="a" style="left:870.4000000000001px;top:305.8px" width="7" height="5" viewBox="0 0 7 5"><path d="M.8 .9l2.7 2.7L6.2 .9" fill="none" stroke="#343a40" stroke-width="1.3"/></svg>
<div class="a" style="left:895px;top:298.5px;width:13px;height:16.6px;background:#dc3545;border-radius:2px"></div>
<svg class="a" style="left:897.8px;top:303.3px" width="7" height="7" viewBox="0 0 7 7"><path d="M1 1l5 5M6 1L1 6" stroke="#fff" stroke-width="2"/></svg>
<div class="a" style="z-index:3;left:852.8px;top:298.1px;width:37.2px;height:19.8px;background:#141414;border-radius:3px"></div>
<svg class="a" style="z-index:3;left:889.9px;top:303.3px" width="4.6" height="9.4" viewBox="0 0 4.6 9.4"><path d="M0 0l4.5 4.7L0 9.4z" fill="#141414"/></svg>
<div class="txt" style="z-index:3;left:852.8px;top:301.3px;width:37.4px;text-align:center;font-size:9px;line-height:13px;font-weight:700;color:#fff">Delete</div>
<div class="a" style="left:194px;top:334.9px;width:724px;height:1px;background:#dee2e6"></div>
<div class="txt" style="left:199.5px;top:341.20px;font-size:10.4px;line-height:16.8px;font-weight:700;color:#212529">4068</div>
<div class="txt" style="left:232px;top:341.20px;font-size:10.4px;line-height:16.8px;letter-spacing:-0.72px;color:#212529">LANGUAGE_INFO</div>
<div class="txt" style="left:369.8px;top:341.20px;font-size:10.4px;line-height:16.8px;color:#212529">Configuring language packs for localization. Here you can edit the wor<br>ds in the CMS Donate Engine interface. After editing is complete, you n<br>eed to save the changes to a file.</div>
<div class="a" style="left:703.3px;top:339.7px;width:53.5px;height:21px;background:#e9ecef;border:1px solid #d6dadf;border-radius:3px"></div><div class="txt" style="left:712.3px;top:343.7px;width:27.5px;overflow:hidden;font-size:9.6px;line-height:13px;color:#495057">English</div><svg class="a" style="left:746.8px;top:347.7px" width="7" height="5" viewBox="0 0 7 5"><path d="M.8 .9l2.7 2.7L6.2 .9" fill="none" stroke="#343a40" stroke-width="1.3"/></svg>
<div class="a" style="left:764.5px;top:339.7px;width:54.2px;height:21px;background:#e9ecef;border:1px solid #d6dadf;border-radius:3px"></div><div class="txt" style="left:773.5px;top:343.7px;width:27px;overflow:hidden;font-size:9.6px;line-height:13px;color:#495057">backend</div><svg class="a" style="left:808.7px;top:347.7px" width="7" height="5" viewBox="0 0 7 5"><path d="M.8 .9l2.7 2.7L6.2 .9" fill="none" stroke="#343a40" stroke-width="1.3"/></svg>
<div class="a" style="left:825.7px;top:339.7px;width:54.7px;height:21px;background:#fff;border:1px solid #d6dadf;border-radius:3px"></div><div class="txt" style="left:834.7px;top:343.7px;width:28px;overflow:hidden;font-size:9.6px;line-height:13px;color:#495057">en: l</div><svg class="a" style="left:870.4000000000001px;top:347.7px" width="7" height="5" viewBox="0 0 7 5"><path d="M.8 .9l2.7 2.7L6.2 .9" fill="none" stroke="#343a40" stroke-width="1.3"/></svg>
<div class="a" style="left:895px;top:340.4px;width:13px;height:16.6px;background:#dc3545;border-radius:2px"></div>
<svg class="a" style="left:897.8px;top:345.2px" width="7" height="7" viewBox="0 0 7 7"><path d="M1 1l5 5M6 1L1 6" stroke="#fff" stroke-width="2"/></svg>
<div class="a" style="z-index:3;left:852.8px;top:340.0px;width:37.2px;height:19.8px;background:#141414;border-radius:3px"></div>
<svg class="a" style="z-index:3;left:889.9px;top:345.2px" width="4.6" height="9.4" viewBox="0 0 4.6 9.4"><path d="M0 0l4.5 4.7L0 9.4z" fill="#141414"/></svg>
<div class="txt" style="z-index:3;left:852.8px;top:343.2px;width:37.4px;text-align:center;font-size:9px;line-height:13px;font-weight:700;color:#fff">Delete</div>
<div class="a" style="left:194px;top:392.7px;width:724px;height:1px;background:#dee2e6"></div>
<div class="txt" style="left:199.5px;top:399.00px;font-size:10.4px;line-height:16.8px;font-weight:700;color:#212529">4071</div>
<div class="txt" style="left:232px;top:399.00px;font-size:10.4px;line-height:16.8px;letter-spacing:-0.72px;color:#212529">LANGUAGE_CHARSET</div>
<div class="txt" style="left:369.8px;top:399.00px;font-size:10.4px;line-height:16.8px;color:#212529">Charset</div>
<div class="a" style="left:703.3px;top:397.5px;width:53.5px;height:21px;background:#e9ecef;border:1px solid #d6dadf;border-radius:3px"></div><div class="txt" style="left:712.3px;top:401.5px;width:27.5px;overflow:hidden;font-size:9.6px;line-height:13px;color:#495057">English</div><svg class="a" style="left:746.8px;top:405.5px" width="7" height="5" viewBox="0 0 7 5"><path d="M.8 .9l2.7 2.7L6.2 .9" fill="none" stroke="#343a40" stroke-width="1.3"/></svg>
<div class="a" style="left:764.5px;top:397.5px;width:54.2px;height:21px;background:#e9ecef;border:1px solid #d6dadf;border-radius:3px"></div><div class="txt" style="left:773.5px;top:401.5px;width:27px;overflow:hidden;font-size:9.6px;line-height:13px;color:#495057">backend</div><svg class="a" style="left:808.7px;top:405.5px" width="7" height="5" viewBox="0 0 7 5"><path d="M.8 .9l2.7 2.7L6.2 .9" fill="none" stroke="#343a40" stroke-width="1.3"/></svg>
<div class="a" style="left:825.7px;top:397.5px;width:54.7px;height:21px;background:#fff;border:1px solid #d6dadf;border-radius:3px"></div><div class="txt" style="left:834.7px;top:401.5px;width:28px;overflow:hidden;font-size:9.6px;line-height:13px;color:#495057">en: l</div><svg class="a" style="left:870.4000000000001px;top:405.5px" width="7" height="5" viewBox="0 0 7 5"><path d="M.8 .9l2.7 2.7L6.2 .9" fill="none" stroke="#343a40" stroke-width="1.3"/></svg>
<div class="a" style="left:895px;top:398.2px;width:13px;height:16.6px;background:#dc3545;border-radius:2px"></div>
<svg class="a" style="left:897.8px;top:403.0px" width="7" height="7" viewBox="0 0 7 7"><path d="M1 1l5 5M6 1L1 6" stroke="#fff" stroke-width="2"/></svg>
<div class="a" style="z-index:3;left:852.8px;top:397.8px;width:37.2px;height:19.8px;background:#141414;border-radius:3px"></div>
<svg class="a" style="z-index:3;left:889.9px;top:403.0px" width="4.6" height="9.4" viewBox="0 0 4.6 9.4"><path d="M0 0l4.5 4.7L0 9.4z" fill="#141414"/></svg>
<div class="txt" style="z-index:3;left:852.8px;top:401.0px;width:37.4px;text-align:center;font-size:9px;line-height:13px;font-weight:700;color:#fff">Delete</div>
<div class="a" style="left:194px;top:421.5px;width:724px;height:1px;background:#dee2e6"></div>
<div class="txt" style="left:199.5px;top:427.80px;font-size:10.4px;line-height:16.8px;font-weight:700;color:#212529">4072</div>
<div class="txt" style="left:232px;top:427.80px;font-size:10.4px;line-height:16.8px;letter-spacing:-0.72px;color:#212529">LANGUAGE_CODE</div>
<div class="txt" style="left:369.8px;top:427.80px;font-size:10.4px;line-height:16.8px;color:#212529">Code</div>
<div class="a" style="left:703.3px;top:426.3px;width:53.5px;height:21px;background:#e9ecef;border:1px solid #d6dadf;border-radius:3px"></div><div class="txt" style="left:712.3px;top:430.3px;width:27.5px;overflow:hidden;font-size:9.6px;line-height:13px;color:#495057">English</div><svg class="a" style="left:746.8px;top:434.3px" width="7" height="5" viewBox="0 0 7 5"><path d="M.8 .9l2.7 2.7L6.2 .9" fill="none" stroke="#343a40" stroke-width="1.3"/></svg>
<div class="a" style="left:764.5px;top:426.3px;width:54.2px;height:21px;background:#e9ecef;border:1px solid #d6dadf;border-radius:3px"></div><div class="txt" style="left:773.5px;top:430.3px;width:27px;overflow:hidden;font-size:9.6px;line-height:13px;color:#495057">backend</div><svg class="a" style="left:808.7px;top:434.3px" width="7" height="5" viewBox="0 0 7 5"><path d="M.8 .9l2.7 2.7L6.2 .9" fill="none" stroke="#343a40" stroke-width="1.3"/></svg>
<div class="a" style="left:825.7px;top:426.3px;width:54.7px;height:21px;background:#fff;border:1px solid #d6dadf;border-radius:3px"></div><div class="txt" style="left:834.7px;top:430.3px;width:28px;overflow:hidden;font-size:9.6px;line-height:13px;color:#495057">en: lan</div><svg class="a" style="left:870.4000000000001px;top:434.3px" width="7" height="5" viewBox="0 0 7 5"><path d="M.8 .9l2.7 2.7L6.2 .9" fill="none" stroke="#343a40" stroke-width="1.3"/></svg>
<div class="a" style="left:895px;top:427.0px;width:13px;height:16.6px;background:#dc3545;border-radius:2px"></div>
<svg class="a" style="left:897.8px;top:431.8px" width="7" height="7" viewBox="0 0 7 7"><path d="M1 1l5 5M6 1L1 6" stroke="#fff" stroke-width="2"/></svg>
<div class="a" style="left:194px;top:450.5px;width:724px;height:1px;background:#dee2e6"></div>
<div class="txt" style="left:199.5px;top:456.80px;font-size:10.4px;line-height:16.8px;font-weight:700;color:#212529">4073</div>
<div class="txt" style="left:232px;top:456.80px;font-size:10.4px;line-height:16.8px;letter-spacing:-0.72px;color:#212529">LANGUAGE_SAVE</div>
<div class="txt" style="left:369.8px;top:456.80px;font-size:10.4px;line-height:16.8px;color:#212529">Save</div>
<div class="a" style="left:703.3px;top:455.3px;width:53.5px;height:21px;background:#e9ecef;border:1px solid #d6dadf;border-radius:3px"></div><div class="txt" style="left:712.3px;top:459.3px;width:27.5px;overflow:hidden;font-size:9.6px;line-height:13px;color:#495057">English</div><svg class="a" style="left:746.8px;top:463.3px" width="7" height="5" viewBox="0 0 7 5"><path d="M.8 .9l2.7 2.7L6.2 .9" fill="none" stroke="#343a40" stroke-width="1.3"/></svg>
<div class="a" style="left:764.5px;top:455.3px;width:54.2px;height:21px;background:#e9ecef;border:1px solid #d6dadf;border-radius:3px"></div><div class="txt" style="left:773.5px;top:459.3px;width:27px;overflow:hidden;font-size:9.6px;line-height:13px;color:#495057">backend</div><svg class="a" style="left:808.7px;top:463.3px" width="7" height="5" viewBox="0 0 7 5"><path d="M.8 .9l2.7 2.7L6.2 .9" fill="none" stroke="#343a40" stroke-width="1.3"/></svg>
<div class="a" style="left:825.7px;top:455.3px;width:54.7px;height:21px;background:#fff;border:1px solid #d6dadf;border-radius:3px"></div><div class="txt" style="left:834.7px;top:459.3px;width:28px;overflow:hidden;font-size:9.6px;line-height:13px;color:#495057">en: lan</div><svg class="a" style="left:870.4000000000001px;top:463.3px" width="7" height="5" viewBox="0 0 7 5"><path d="M.8 .9l2.7 2.7L6.2 .9" fill="none" stroke="#343a40" stroke-width="1.3"/></svg>
<div class="a" style="left:895px;top:456.0px;width:13px;height:16.6px;background:#dc3545;border-radius:2px"></div>
<svg class="a" style="left:897.8px;top:460.8px" width="7" height="7" viewBox="0 0 7 7"><path d="M1 1l5 5M6 1L1 6" stroke="#fff" stroke-width="2"/></svg>
<div class="a" style="left:194px;top:479.5px;width:724px;height:1px;background:#dee2e6"></div>
<div class="txt" style="left:199.5px;top:485.80px;font-size:10.4px;line-height:16.8px;font-weight:700;color:#212529">4074</div>
<div class="txt" style="left:232px;top:485.80px;font-size:10.4px;line-height:16.8px;letter-spacing:-0.72px;color:#212529">LANGUAGE_AUTHOR</div>
<div class="txt" style="left:369.8px;top:485.80px;font-size:10.4px;line-height:16.8px;color:#212529">Author</div>
<div class="a" style="left:703.3px;top:484.3px;width:53.5px;height:21px;background:#e9ecef;border:1px solid #d6dadf;border-radius:3px"></div><div class="txt" style="left:712.3px;top:488.3px;width:27.5px;overflow:hidden;font-size:9.6px;line-height:13px;color:#495057">English</div><svg class="a" style="left:746.8px;top:492.3px" width="7" height="5" viewBox="0 0 7 5"><path d="M.8 .9l2.7 2.7L6.2 .9" fill="none" stroke="#343a40" stroke-width="1.3"/></svg>
<div class="a" style="left:764.5px;top:484.3px;width:54.2px;height:21px;background:#e9ecef;border:1px solid #d6dadf;border-radius:3px"></div><div class="txt" style="left:773.5px;top:488.3px;width:27px;overflow:hidden;font-size:9.6px;line-height:13px;color:#495057">backend</div><svg class="a" style="left:808.7px;top:492.3px" width="7" height="5" viewBox="0 0 7 5"><path d="M.8 .9l2.7 2.7L6.2 .9" fill="none" stroke="#343a40" stroke-width="1.3"/></svg>
<div class="a" style="left:825.7px;top:484.3px;width:54.7px;height:21px;background:#fff;border:1px solid #d6dadf;border-radius:3px"></div><div class="txt" style="left:834.7px;top:488.3px;width:28px;overflow:hidden;font-size:9.6px;line-height:13px;color:#495057">en: lan</div><svg class="a" style="left:870.4000000000001px;top:492.3px" width="7" height="5" viewBox="0 0 7 5"><path d="M.8 .9l2.7 2.7L6.2 .9" fill="none" stroke="#343a40" stroke-width="1.3"/></svg>
<div class="a" style="left:895px;top:485.0px;width:13px;height:16.6px;background:#dc3545;border-radius:2px"></div>
<svg class="a" style="left:897.8px;top:489.8px" width="7" height="7" viewBox="0 0 7 7"><path d="M1 1l5 5M6 1L1 6" stroke="#fff" stroke-width="2"/></svg>
<div class="a" style="left:194px;top:508.7px;width:724px;height:1px;background:#dee2e6"></div>
<div class="txt" style="left:199.5px;top:515.00px;font-size:10.4px;line-height:16.8px;font-weight:700;color:#212529">4075</div>
<div class="txt" style="left:232px;top:515.00px;font-size:10.4px;line-height:16.8px;letter-spacing:-0.72px;color:#212529">LANGUAGE_COMPILE</div>
<div class="txt" style="left:369.8px;top:515.00px;font-size:10.4px;line-height:16.8px;color:#212529">After editing the language packs, you need to save the changes to a fil<br>e for caching</div>
<div class="a" style="left:703.3px;top:513.5px;width:53.5px;height:21px;background:#e9ecef;border:1px solid #d6dadf;border-radius:3px"></div><div class="txt" style="left:712.3px;top:517.5px;width:27.5px;overflow:hidden;font-size:9.6px;line-height:13px;color:#495057">English</div><svg class="a" style="left:746.8px;top:521.5px" width="7" height="5" viewBox="0 0 7 5"><path d="M.8 .9l2.7 2.7L6.2 .9" fill="none" stroke="#343a40" stroke-width="1.3"/></svg>
<div class="a" style="left:764.5px;top:513.5px;width:54.2px;height:21px;background:#e9ecef;border:1px solid #d6dadf;border-radius:3px"></div><div class="txt" style="left:773.5px;top:517.5px;width:27px;overflow:hidden;font-size:9.6px;line-height:13px;color:#495057">backend</div><svg class="a" style="left:808.7px;top:521.5px" width="7" height="5" viewBox="0 0 7 5"><path d="M.8 .9l2.7 2.7L6.2 .9" fill="none" stroke="#343a40" stroke-width="1.3"/></svg>
<div class="a" style="left:825.7px;top:513.5px;width:54.7px;height:21px;background:#fff;border:1px solid #d6dadf;border-radius:3px"></div><div class="txt" style="left:834.7px;top:517.5px;width:28px;overflow:hidden;font-size:9.6px;line-height:13px;color:#495057">en: lan</div><svg class="a" style="left:870.4000000000001px;top:521.5px" width="7" height="5" viewBox="0 0 7 5"><path d="M.8 .9l2.7 2.7L6.2 .9" fill="none" stroke="#343a40" stroke-width="1.3"/></svg>
<div class="a" style="left:895px;top:514.2px;width:13px;height:16.6px;background:#dc3545;border-radius:2px"></div>
<svg class="a" style="left:897.8px;top:519.0px" width="7" height="7" viewBox="0 0 7 7"><path d="M1 1l5 5M6 1L1 6" stroke="#fff" stroke-width="2"/></svg>
<div class="a" style="left:194px;top:549.7px;width:724px;height:1px;background:#dee2e6"></div>
<div class="txt" style="left:199.5px;top:556.00px;font-size:10.4px;line-height:16.8px;font-weight:700;color:#212529">4076</div>
<div class="txt" style="left:232px;top:556.00px;font-size:10.4px;line-height:16.8px;letter-spacing:-0.72px;color:#212529">LANGUAGE_FILTER</div>
<div class="txt" style="left:369.8px;top:556.00px;font-size:10.4px;line-height:16.8px;color:#212529">Filter</div>
<div class="a" style="left:703.3px;top:554.5px;width:53.5px;height:21px;background:#e9ecef;border:1px solid #d6dadf;border-radius:3px"></div><div class="txt" style="left:712.3px;top:558.5px;width:27.5px;overflow:hidden;font-size:9.6px;line-height:13px;color:#495057">English</div><svg class="a" style="left:746.8px;top:562.5px" width="7" height="5" viewBox="0 0 7 5"><path d="M.8 .9l2.7 2.7L6.2 .9" fill="none" stroke="#343a40" stroke-width="1.3"/></svg>
<div class="a" style="left:764.5px;top:554.5px;width:54.2px;height:21px;background:#e9ecef;border:1px solid #d6dadf;border-radius:3px"></div><div class="txt" style="left:773.5px;top:558.5px;width:27px;overflow:hidden;font-size:9.6px;line-height:13px;color:#495057">backend</div><svg class="a" style="left:808.7px;top:562.5px" width="7" height="5" viewBox="0 0 7 5"><path d="M.8 .9l2.7 2.7L6.2 .9" fill="none" stroke="#343a40" stroke-width="1.3"/></svg>
<div class="a" style="left:825.7px;top:554.5px;width:54.7px;height:21px;background:#fff;border:1px solid #d6dadf;border-radius:3px"></div><div class="txt" style="left:834.7px;top:558.5px;width:28px;overflow:hidden;font-size:9.6px;line-height:13px;color:#495057">en: lan</div><svg class="a" style="left:870.4000000000001px;top:562.5px" width="7" height="5" viewBox="0 0 7 5"><path d="M.8 .9l2.7 2.7L6.2 .9" fill="none" stroke="#343a40" stroke-width="1.3"/></svg>
<div class="a" style="left:895px;top:555.2px;width:13px;height:16.6px;background:#dc3545;border-radius:2px"></div>
<svg class="a" style="left:897.8px;top:560.0px" width="7" height="7" viewBox="0 0 7 7"><path d="M1 1l5 5M6 1L1 6" stroke="#fff" stroke-width="2"/></svg>
<div class="a" style="left:194px;top:578.6px;width:724px;height:1px;background:#dee2e6"></div>
<div class="txt" style="left:199.5px;top:584.90px;font-size:10.4px;line-height:16.8px;font-weight:700;color:#212529">4077</div>
<div class="txt" style="left:232px;top:584.90px;font-size:10.4px;line-height:16.8px;letter-spacing:-0.72px;color:#212529">LANGUAGE_PACKEDIT</div>
<div class="txt" style="left:369.8px;top:584.90px;font-size:10.4px;line-height:16.8px;color:#212529">Edit language packet</div>
<div class="a" style="left:703.3px;top:583.4px;width:53.5px;height:21px;background:#e9ecef;border:1px solid #d6dadf;border-radius:3px"></div><div class="txt" style="left:712.3px;top:587.4px;width:27.5px;overflow:hidden;font-size:9.6px;line-height:13px;color:#495057">English</div><svg class="a" style="left:746.8px;top:591.4px" width="7" height="5" viewBox="0 0 7 5"><path d="M.8 .9l2.7 2.7L6.2 .9" fill="none" stroke="#343a40" stroke-width="1.3"/></svg>
<div class="a" style="left:764.5px;top:583.4px;width:54.2px;height:21px;background:#e9ecef;border:1px solid #d6dadf;border-radius:3px"></div><div class="txt" style="left:773.5px;top:587.4px;width:27px;overflow:hidden;font-size:9.6px;line-height:13px;color:#495057">backend</div><svg class="a" style="left:808.7px;top:591.4px" width="7" height="5" viewBox="0 0 7 5"><path d="M.8 .9l2.7 2.7L6.2 .9" fill="none" stroke="#343a40" stroke-width="1.3"/></svg>
<div class="a" style="left:825.7px;top:583.4px;width:54.7px;height:21px;background:#fff;border:1px solid #d6dadf;border-radius:3px"></div><div class="txt" style="left:834.7px;top:587.4px;width:28px;overflow:hidden;font-size:9.6px;line-height:13px;color:#495057">en: lan</div><svg class="a" style="left:870.4000000000001px;top:591.4px" width="7" height="5" viewBox="0 0 7 5"><path d="M.8 .9l2.7 2.7L6.2 .9" fill="none" stroke="#343a40" stroke-width="1.3"/></svg>
<div class="a" style="left:895px;top:584.1px;width:13px;height:16.6px;background:#dc3545;border-radius:2px"></div>
<svg class="a" style="left:897.8px;top:588.9px" width="7" height="7" viewBox="0 0 7 7"><path d="M1 1l5 5M6 1L1 6" stroke="#fff" stroke-width="2"/></svg>
<div class="a" style="z-index:4;left:702.2px;top:490px;width:227.4px;height:28.4px;background:rgba(40,188,152,.9);border-radius:3px"></div><div class="a" style="z-index:4;left:702.2px;top:516.6px;width:165px;height:1.6px;background:rgba(0,0,0,.14)"></div>
<div class="txt" style="z-index:4;left:709.4px;top:498.5px;font-size:9px;line-height:13px;color:#fff;-webkit-text-stroke:.3px #fff">Data removed successfully!</div>
<div class="a" style="z-index:4;left:702.2px;top:521.9px;width:227.4px;height:28.4px;background:rgba(40,188,152,.9);border-radius:3px"></div><div class="a" style="z-index:4;left:702.2px;top:548.5px;width:165px;height:1.6px;background:rgba(0,0,0,.14)"></div>
<div class="txt" style="z-index:4;left:709.4px;top:530.4px;font-size:9px;line-height:13px;color:#fff;-webkit-text-stroke:.3px #fff">Data removed successfully!</div>
<div class="a" style="z-index:4;left:702.2px;top:553.1px;width:227.4px;height:28.4px;background:rgba(40,188,152,.9);border-radius:3px"></div><div class="a" style="z-index:4;left:702.2px;top:579.7px;width:165px;height:1.6px;background:rgba(0,0,0,.14)"></div>
<div class="txt" style="z-index:4;left:709.4px;top:561.6px;font-size:9px;line-height:13px;color:#fff;-webkit-text-stroke:.3px #fff">Data removed successfully!</div>
<div id="scroll" class="a"></div>
<div class="a" style="z-index:6;left:944px;top:22px;width:8px;height:11px;background:#f1f1f1"></div><svg class="a" style="z-index:6;left:945px;top:25px" width="6" height="4" viewBox="0 0 6 4"><path d="M0 4L3 .5 6 4z" fill="#a3a3a3"/></svg><div class="a" style="z-index:6;left:944.5px;top:33px;width:7px;height:405px;background:#c1c1c1"></div>
</body></html>
